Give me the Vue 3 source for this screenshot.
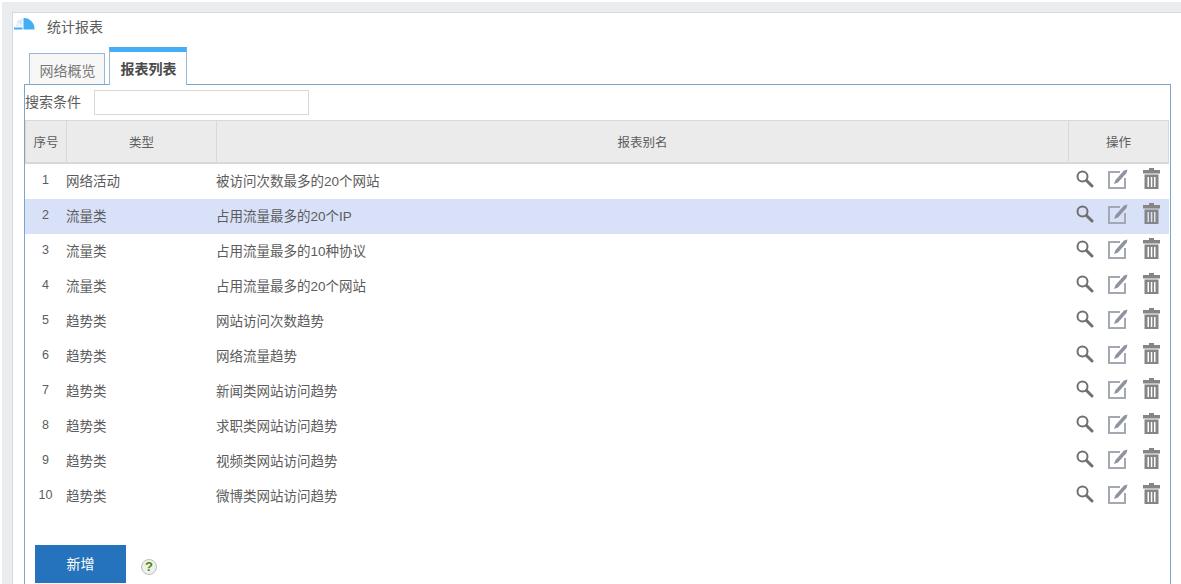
<script setup>
const rows = [
  ['网络活动', '被访问次数最多的20个网站'],
  ['流量类', '占用流量最多的20个IP'],
  ['流量类', '占用流量最多的10种协议'],
  ['流量类', '占用流量最多的20个网站'],
  ['趋势类', '网站访问次数趋势'],
  ['趋势类', '网络流量趋势'],
  ['趋势类', '新闻类网站访问趋势'],
  ['趋势类', '求职类网站访问趋势'],
  ['趋势类', '视频类网站访问趋势'],
  ['趋势类', '微博类网站访问趋势'],
]
</script>

<template>
  <div class="page">
    <div class="shell">
      <div class="panel">
        <div class="title">
          <svg class="logo" width="21" height="13" viewBox="0 0 21 13">
            <path d="M9.500 0 A10.500 10.500 0 0 1 20.500 10.500 L20.500 11.500 L9.500 11.500 Z" fill="#41aef5" />
            <path d="M8.500 0.500 A10 10 0 0 0 2.500 4 L8.500 8 Z" fill="#d5e9f8" />
            <path d="M0 9.500 H8.500 V11.500 H0 Z" fill="#41aef5" />
            <path d="M1 8.500 L3 5 L8.500 8.500 Z" fill="#e6f2fb" />
          </svg>
          <span>统计报表</span>
        </div>
        <div class="tabs">
          <div class="tab">网络概览</div>
          <div class="tab active">报表列表</div>
        </div>
        <div class="box">
          <div class="search">
            <label>搜索条件</label>
            <input type="text" />
          </div>
          <table>
            <colgroup>
              <col class="c1" /><col class="c2" /><col /><col class="c4" />
            </colgroup>
            <thead>
              <tr><th>序号</th><th>类型</th><th>报表别名</th><th>操作</th></tr>
            </thead>
            <tbody>
              <tr v-for="(r, i) in rows" :key="i" :class="{ sel: i === 1 }">
                <td class="num">{{ i + 1 }}</td>
                <td>{{ r[0] }}</td>
                <td>{{ r[1] }}</td>
                <td>
                  <div class="ops">
                    <svg width="18" height="22" viewBox="0 0 18 22">
                      <circle cx="6.500" cy="8.500" r="5" fill="none" stroke="#707070" stroke-width="2" />
                      <path d="M10.500 12.500 L16 18" stroke="#707070" stroke-width="3" stroke-linecap="round" />
                    </svg>
                    <svg width="20" height="22" viewBox="0 0 20 22">
                      <path d="M12 4 H1 V20 H17 V10" fill="none" stroke="#a4a8b0" stroke-width="2" />
                      <path d="M6 16 L7.500 12 L16 2.500 L19.500 1.500 L18.500 5 L10 14.500 Z" fill="#8f93a0" />
                    </svg>
                    <svg width="17" height="22" viewBox="0 0 17 22">
                      <path d="M6 0 H11 V2 H17 V5.500 H0 V2 H6 Z" fill="#858585" />
                      <path d="M1.500 6.500 H15.500 V21 H1.500 Z M4.500 9 V19 H6 V9 Z M7.800 9 V19 H9.300 V9 Z M11 9 V19 H12.500 V9 Z" fill="#858585" fill-rule="evenodd" />
                    </svg>
                  </div>
                </td>
              </tr>
            </tbody>
          </table>
          <div class="actions">
            <button type="button">新增</button>
            <span class="help">?</span>
          </div>
        </div>
      </div>
    </div>
  </div>
</template>

<style>
html, body { margin: 0; background: #fff; overflow: hidden; }
</style>

<style scoped>
.page {
  height: 584px;
  box-sizing: border-box;
  padding: 2px 0 0 2px;
  font-family: "Liberation Sans", "Noto Sans CJK SC", sans-serif;
  font-size: 13.5px;
  color: #5c5c5c;
  overflow: hidden;
}
.shell {
  background: #e9edf0;
  padding: 10px 0 0 10px;
  height: 600px;
}
.panel {
  background: #fff;
  border: solid #d5d8da;
  border-width: 1px 0 0 1px;
  height: 600px;
}
.title {
  display: flex;
  align-items: center;
  height: 25px;
  font-size: 14px;
  padding-left: 1px;
}
.logo { margin: -3px 12px 0 0; }
.tabs {
  display: flex;
  align-items: flex-end;
  gap: 4px;
  height: 46px;
  padding-left: 16px;
}
.tab {
  box-sizing: border-box;
  width: 76px;
  height: 31px;
  padding-left: 1px;
  border: 1px solid #9bb6d6;
  border-bottom: 0;
  background: #f7f7f7;
  text-align: center;
  line-height: 35px;
  font-size: 14px;
  color: #777;
}
.tab.active {
  width: 78px;
  height: 38px;
  border-top: 5px solid #41aef5;
  background: #fff;
  color: #4a4a4a;
  font-weight: 700;
  line-height: 35px;
  position: relative;
  z-index: 1;
  margin-bottom: -1px;
}
.box {
  border: 1px solid #7ca7cc;
  margin-left: 11px;
  height: 520px;
  box-sizing: border-box;
  width: 1147px;
}
.search {
  display: flex;
  align-items: center;
  height: 35px;
  font-size: 14px;
}
.search label { margin-top: -3px; }
.search input {
  box-sizing: border-box;
  width: 215px;
  height: 25px;
  margin-left: 13px;
  border: 1px solid #d8d8d8;
  outline: 0;
  background: #fff;
}
table {
  width: 1144px;
  border-collapse: separate;
  border-spacing: 0;
  table-layout: fixed;
}
.c1 { width: 41px; }
.c2 { width: 150px; }
.c4 { width: 101px; }
th {
  height: 41px;
  padding: 0;
  background: #ebebeb;
  border: solid #d8d8d8;
  border-width: 1px 0 2px 1px;
  font-weight: 400;
  font-size: 12.5px;
  color: #5c5c5c;
}
th:last-child { border-right: 1px solid #d8d8d8; }
td {
  height: 31px;
  padding: 0 0 4px;
}
.num { text-align: center; font-size: 12.5px; }
tr.sel td { background: #d8e1f8; }
.ops {
  display: flex;
  align-items: center;
  margin-top: -1px;
  padding-left: 8px;
}
.ops svg:nth-child(2) { margin: 0 15px 0 14px; }
.actions {
  display: flex;
  align-items: center;
  gap: 15px;
  margin: 31px 0 0 10px;
}
button {
  width: 91px;
  height: 38px;
  padding: 0 0 2px;
  border: 0;
  background: #2573bc;
  color: #fff;
  font: 14px "Noto Sans CJK SC", sans-serif;
}
.help {
  box-sizing: border-box;
  width: 16px;
  height: 16px;
  border: 1px solid #bdbdbd;
  border-radius: 50%;
  background: #eef1ea;
  color: #4b8a00;
  font: 700 13px/14px "Liberation Sans", sans-serif;
  text-align: center;
  margin-top: 6px;
}
</style>
